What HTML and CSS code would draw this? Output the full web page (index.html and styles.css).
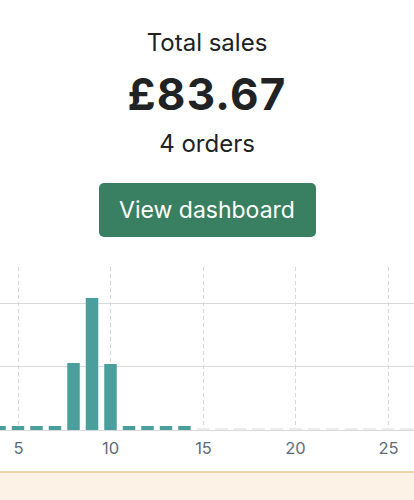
FILE: index.html
```html
<!DOCTYPE html>
<html lang="en">
<head>
<meta charset="utf-8">
<title>Total sales</title>
<link rel="stylesheet" href="styles.css">
</head>
<body>
<main class="page">
  <section class="summary">
    <div class="label">Total sales</div>
    <div class="amount">£83.67</div>
    <div class="orders">4 orders</div>
    <a class="btn" href="#">View dashboard</a>
  </section>
  <section class="chart">
    <svg class="chart-svg" width="414" height="210" viewBox="0 0 414 210" xmlns="http://www.w3.org/2000/svg">
      <g stroke="#d9d9dc" stroke-width="1" fill="none">
        <line x1="0" y1="43.5" x2="414" y2="43.5"/>
        <line x1="0" y1="106.5" x2="414" y2="106.5"/>
        <line x1="0" y1="170.5" x2="414" y2="170.5"/>
      </g>
      <g stroke="#d6d6d9" stroke-width="1" stroke-dasharray="4 3" fill="none">
        <line x1="18.5" y1="7" x2="18.5" y2="170"/>
        <line x1="110.5" y1="7" x2="110.5" y2="170"/>
        <line x1="203.5" y1="7" x2="203.5" y2="170"/>
        <line x1="295.5" y1="7" x2="295.5" y2="170"/>
        <line x1="388.5" y1="7" x2="388.5" y2="170"/>
      </g>
      <g fill="#4a9e9b">
        <rect x="-6.75" y="166" width="12.5" height="4"/>
        <rect x="11.75" y="166" width="12.5" height="4"/>
        <rect x="30.25" y="166" width="12.5" height="4"/>
        <rect x="48.75" y="166" width="12.5" height="4"/>
        <rect x="67.25" y="103" width="12.5" height="67"/>
        <rect x="85.75" y="38" width="12.5" height="132"/>
        <rect x="104.25" y="104" width="12.5" height="66"/>
        <rect x="122.75" y="166" width="12.5" height="4"/>
        <rect x="141.25" y="166" width="12.5" height="4"/>
        <rect x="159.75" y="166" width="12.5" height="4"/>
        <rect x="178.25" y="166" width="12.5" height="4"/>
      </g>
      <g fill="#ececee">
        <rect x="196.75" y="168" width="12.5" height="2"/>
        <rect x="215.25" y="168" width="12.5" height="2"/>
        <rect x="233.75" y="168" width="12.5" height="2"/>
        <rect x="252.25" y="168" width="12.5" height="2"/>
        <rect x="270.75" y="168" width="12.5" height="2"/>
        <rect x="289.25" y="168" width="12.5" height="2"/>
        <rect x="307.75" y="168" width="12.5" height="2"/>
        <rect x="326.25" y="168" width="12.5" height="2"/>
        <rect x="344.75" y="168" width="12.5" height="2"/>
        <rect x="363.25" y="168" width="12.5" height="2"/>
        <rect x="381.75" y="168" width="12.5" height="2"/>
        <rect x="400.25" y="168" width="12.5" height="2"/>
      </g>
      <g class="axis-label" fill="#5f6b7a" text-anchor="middle">
        <text x="18.5" y="194">5</text>
        <text x="110.5" y="194">10</text>
        <text x="203.5" y="194">15</text>
        <text x="295.5" y="194">20</text>
        <text x="388.5" y="194">25</text>
      </g>
    </svg>
  </section>
  <section class="banner"></section>
</main>
</body>
</html>
```

FILE: styles.css
```css
html, body {
  margin: 0;
  padding: 0;
  background: #ffffff;
}
body {
  font-family: Inter, "Noto Sans", "Liberation Sans", sans-serif;
  color: #202223;
  width: 414px;
  height: 500px;
  overflow: hidden;
}
.page {
  display: flex;
  flex-direction: column;
}
.summary {
  display: flex;
  flex-direction: column;
  align-items: center;
  padding-top: 28px;
}
.label {
  font-size: 24px;
  line-height: 30px;
  height: 30px;
}
.amount {
  font-size: 44px;
  font-weight: 700;
  line-height: 52px;
  height: 52px;
  margin-top: 10px;
  letter-spacing: 1.2px;
}
.orders {
  font-size: 24px;
  line-height: 30px;
  height: 30px;
  margin-top: 9px;
}
.btn {
  margin-top: 24px;
  display: flex;
  align-items: center;
  justify-content: center;
  width: 217px;
  height: 54px;
  box-sizing: border-box;
  background: #397f61;
  color: #ffffff;
  border-radius: 5px;
  text-decoration: none;
  font-size: 23px;
}
.chart {
  margin-top: 23px;
  height: 211px;
}
.chart-svg {
  display: block;
}
.axis-label {
  font-family: Inter, "Noto Sans", "Liberation Sans", sans-serif;
  font-size: 16.5px;
}
.banner {
  height: 40px;
  background: #fcf2e6;
  border-top: 2px solid #ead6a8;
}
```
